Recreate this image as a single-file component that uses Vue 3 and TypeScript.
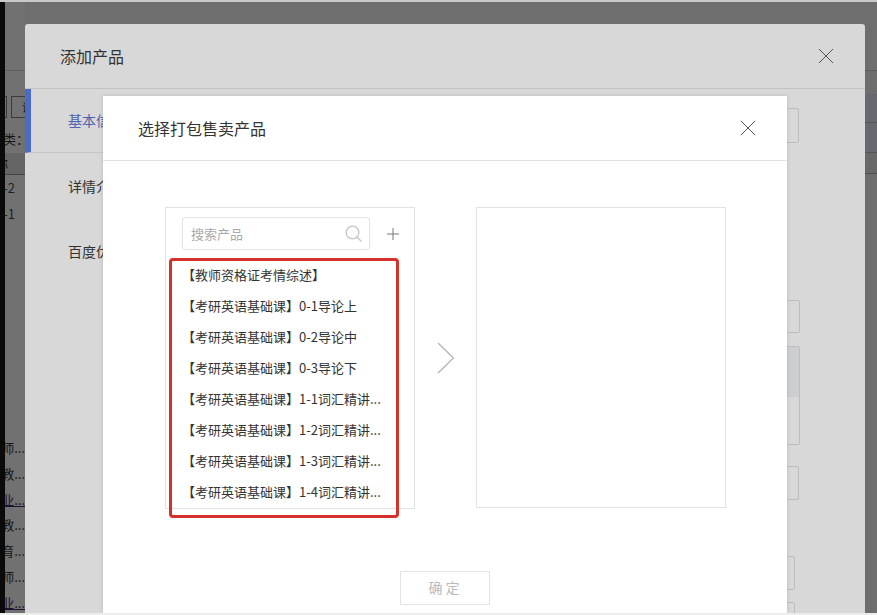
<script setup lang="ts">
const products: string[] = [
  '【教师资格证考情综述】',
  '【考研英语基础课】0-1导论上',
  '【考研英语基础课】0-2导论中',
  '【考研英语基础课】0-3导论下',
  '【考研英语基础课】1-1词汇精讲...',
  '【考研英语基础课】1-2词汇精讲...',
  '【考研英语基础课】1-3词汇精讲...',
  '【考研英语基础课】1-4词汇精讲...',
]
const backRows: string[] = ['教师...', '教...', '专业...', '教...', '教育...', '教师...', '专业...']
const sideItems: string[] = ['详情介绍', '百度优化']
</script>

<template>
  <div class="page">
    <div class="black"></div>
    <div class="back-left">
      <div class="back-line"></div>
      <div class="back-btns"><span class="back-btn first"></span><span class="back-btn second">设置</span></div>
      <div class="back-cat">类：</div>
      <div class="back-head">名称</div>
      <div class="back-code">1-2</div>
      <div class="back-code">1-1</div>
      <div class="back-list">
        <div v-for="(r, i) in backRows" :key="i" class="back-row" :class="{ link: i === 2 || i === 6 }">{{ r }}</div>
      </div>
    </div>
    <div class="back-right">
      <div class="back-r1"></div>
      <div class="back-r2"></div>
      <div class="back-r3"></div>
      <div class="back-r4"></div>
    </div>

    <section class="outer">
      <header class="outer-head">
        <h2 class="title">添加产品</h2>
        <svg class="close" width="16" height="16" viewBox="0 0 16 16"><path d="M1 1L15 15M15 1L1 15" /></svg>
      </header>
      <div class="outer-body">
        <aside class="side">
          <div class="side-active">基本信息</div>
          <div v-for="s in sideItems" :key="s" class="side-item">{{ s }}</div>
        </aside>
        <div class="form">
          <div class="field f1"></div>
          <div class="field f2"></div>
          <div class="field f3"><div class="f3-top"></div></div>
          <div class="field f4"></div>
          <div class="field f5"></div>
          <div class="field f6"></div>
        </div>
      </div>
    </section>

    <section class="inner">
      <header class="inner-head">
        <h2 class="title">选择打包售卖产品</h2>
        <svg class="close" width="16" height="16" viewBox="0 0 16 16"><path d="M1 1L15 15M15 1L1 15" /></svg>
      </header>
      <div class="transfer">
        <div class="panel left-panel">
          <div class="search-row">
            <div class="search">
              <span class="placeholder">搜索产品</span>
              <svg class="lens" width="18" height="18" viewBox="0 0 18 18">
                <circle cx="7.5" cy="7.5" r="6.3" />
                <path d="M12.2 12.2L16.5 16.5" />
              </svg>
            </div>
            <svg class="plus" width="14" height="14" viewBox="0 0 14 14"><path d="M7 1V13M1 7H13" /></svg>
          </div>
          <ul class="list">
            <li v-for="p in products" :key="p" class="item">{{ p }}</li>
          </ul>
        </div>
        <svg class="arrow" width="18" height="32" viewBox="0 0 18 32"><path d="M1 1L16.500 16L1 31" /></svg>
        <div class="panel right-panel"></div>
      </div>
      <div class="foot"><button class="ok" type="button">确 定</button></div>
    </section>

    <div class="highlight"></div>
    <div class="bottom-edge"></div>
  </div>
</template>

<style>
html, body { margin: 0; padding: 0; background: #6f6f6f; overflow: hidden; }
</style>

<style scoped>
.page {
  position: relative;
  width: 877px;
  height: 615px;
  overflow: hidden;
  display: flex;
  background: #6e6e6e;
  border-top: 2px solid #c9c9c9;
  box-sizing: border-box;
  font-family: "Noto Sans CJK SC", "Liberation Sans", sans-serif;
  color: #333;
}
.black { width: 5px; background: #0a0a0a; flex: none; }
.back-left {
  width: 20px;
  flex: none;
  overflow: hidden;
  white-space: nowrap;
  font-size: 13px;
  color: #161616;
  display: flex;
  flex-direction: column;
  align-items: flex-end;
  background: #717171;
}
.back-line { width: 100%; height: 1px; background: #5e5e5e; margin-top: 68px; flex: none; }
.back-btns { display: flex; gap: 4px; margin-top: 25px; height: 23px; flex: none; align-self: flex-start; margin-left: -8px; }
.back-btn { height: 22px; box-sizing: border-box; border: 1px solid #3c3c3c; font-size: 11px; line-height: 20px; flex: none; }
.back-btn.first { width: 10px; }
.back-btn.second { width: 34px; padding-left: 10px; }
.back-cat { margin-top: 10px; margin-left: -2px; height: 20px; line-height: 20px; flex: none; align-self: flex-start; }
.back-head {
  width: 100%;
  height: 21px;
  line-height: 21px;
  margin-top: 4px;
  border-bottom: 1px solid #444;
  flex: none;
  background: #656565;
  display: flex;
  justify-content: flex-end;
  padding-right: 17px;
  box-sizing: content-box;
  margin-left: -17px;
}
.back-code { height: 26px; line-height: 26px; flex: none; color: #1e1e1e; padding-right: 10px; }
.back-list { margin-top: 208px; flex: none; }
.back-row { height: 25.8px; line-height: 25.8px; text-align: right; width: 42px; font-size: 13px; }
.back-row.link { text-decoration: underline; color: #1d1030; }

.back-right { position: absolute; left: 865px; top: 0; width: 12px; }
.back-r1 { height: 1px; margin-top: 68px; background: #5e5e5e; }
.back-r2 { height: 28px; margin-top: 23px; background: #666a70; border-bottom: 1px solid #555; }
.back-r3 { height: 29px; background: #666a70; border-bottom: 1px solid #555; }
.back-r4 { height: 20px; background: #696969; border-bottom: 1px solid #505050; }

.outer {
  position: absolute;
  left: 25px;
  top: 22px;
  width: 840px;
  height: 589px;
  background: #d8d8d8;
  border-radius: 3px 3px 0 0;
  display: flex;
  flex-direction: column;
}
.outer-head {
  height: 65px;
  flex: none;
  box-sizing: border-box;
  border-bottom: 1px solid #c2c2c2;
  padding: 0 31px 0 35px;
  display: flex;
  align-items: center;
  justify-content: space-between;
}
.title { margin: 0; font-size: 16px; font-weight: 400; color: #333; line-height: 22px; }
.close { flex: none; }
.close path { fill: none; stroke: #555; stroke-width: 1; }
.outer-body { flex: 1; display: flex; min-height: 0; }
.side { width: 78px; flex: none; font-size: 14px; color: #333; overflow: hidden; white-space: nowrap; }
.side-active {
  height: 64px;
  box-sizing: border-box;
  border-left: 6px solid #4a6cc4;
  border-bottom: 1px solid #c6c6c6;
  padding-left: 37px;
  line-height: 62px;
  color: #4d63b0;
}
.side-item { height: 65px; line-height: 66px; padding-left: 43px; }
.form { flex: 1; position: relative; overflow: hidden; display: flex; flex-direction: column; align-items: flex-start; }
.field { border: 1px solid #bdbdbd; box-sizing: border-box; border-radius: 2px; margin-left: 600px; flex: none; }
.f1 { width: 96px; height: 35px; margin-top: 19px; }
.f2 { width: 97px; height: 33px; margin-top: 157px; }
.f3 { width: 97px; height: 99px; margin-top: 13px; }
.f3-top { height: 50px; background: #cdced2; }
.f4 { width: 96px; height: 34px; margin-top: 21px; }
.f5 { width: 92px; height: 34px; margin-top: 56px; }
.f6 { width: 92px; height: 12px; margin-top: 12px; }

.inner {
  position: absolute;
  left: 103px;
  top: 94px;
  width: 684px;
  height: 517px;
  background: #fff;
  box-shadow: 0 0 4px rgba(0, 0, 0, 0.14);
  display: flex;
  flex-direction: column;
}
.inner-head {
  height: 65px;
  box-sizing: border-box;
  flex: none;
  border-bottom: 1px solid #e4e4e4;
  padding: 0 31px 0 35px;
  display: flex;
  align-items: center;
  justify-content: space-between;
}
.transfer { display: flex; align-items: center; padding: 46px 0 0 62px; flex: none; }
.panel { box-sizing: border-box; width: 250px; border: 1px solid #e2e2e2; flex: none; }
.left-panel { height: 302px; overflow: hidden; }
.right-panel { height: 301px; margin-left: 21px; align-self: flex-start; }
.arrow { margin-left: 22px; flex: none; }
.arrow path { fill: none; stroke: #b0b0b0; stroke-width: 1.2; }
.search-row { display: flex; align-items: center; padding: 9px 0 0 16px; }
.search {
  box-sizing: border-box;
  width: 188px;
  height: 33px;
  border: 1px solid #e3e3e3;
  border-radius: 3px;
  display: flex;
  align-items: center;
  justify-content: space-between;
  padding: 0 6px 0 8px;
}
.placeholder { font-size: 13px; color: #aaa; }
.lens { margin-top: 1px; }
.lens circle, .lens path { fill: none; stroke: #c4c4c4; stroke-width: 1.3; }
.plus { margin-left: 16px; }
.plus path { fill: none; stroke: #777; stroke-width: 1; }
.list { list-style: none; margin: 9px 0 0; padding: 0 0 0 16px; }
.item {
  height: 31px;
  line-height: 31px;
  font-size: 13px;
  color: #333;
  white-space: nowrap;
}
.foot { display: flex; justify-content: center; padding-top: 62px; }
.ok {
  width: 90px;
  height: 34px;
  background: #fff;
  border: 1px solid #e4e4e4;
  font-family: inherit;
  font-size: 14px;
  color: #bbb;
  padding: 0 2px 2px 0;
}

.highlight {
  position: absolute;
  left: 169px;
  top: 256px;
  width: 230px;
  height: 260px;
  box-sizing: border-box;
  border: 3px solid #d5302a;
  border-radius: 4px;
  pointer-events: none;
}
.bottom-edge { position: absolute; left: 0; right: 0; top: 611px; height: 2px; background: #eceeee; }
</style>
